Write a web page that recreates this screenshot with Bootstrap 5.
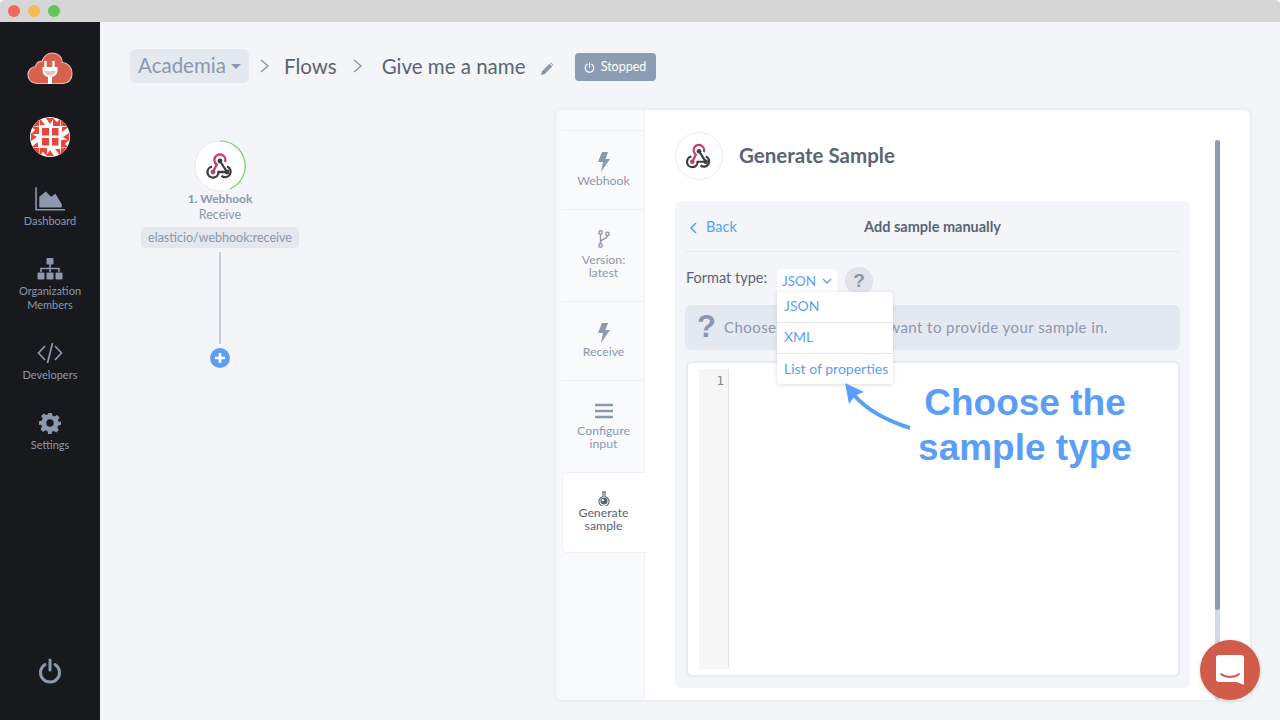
<!DOCTYPE html>
<html lang="en">
<head>
    <meta charset="UTF-8">
    <title>Generate Sample</title>
    <link rel="stylesheet" href="https://cdn.jsdelivr.net/npm/bootstrap@5.3.0/dist/css/bootstrap.min.css">
    <style>
        html, body { height: 720px; overflow: hidden; }
        body { font-family: Lato, "Noto Sans", sans-serif; background: #f3f5f8; color: #5a6473; }
        .mac-bar { height: 22px; background: #d6d6d6; padding-left: 8px; gap: 8px; border-radius: 5px 5px 0 0; }
        .mac-dot { width: 12px; height: 12px; border-radius: 50%; }
        .app-wrap { height: 698px; position: relative; }

        .side-rail { width: 100px; background: #17191c; color: #8b98ae; font-size: 11px; line-height: 14px; }
        .rail-logo { margin-top: 29px; }
        .rail-avatar { margin-top: 30px; margin-bottom: 30px; }
        .rail-link { height: 70px; }
        .rail-tall { height: 84px; }
        .rail-ico { height: 24px; margin-bottom: 3px; }
        .rail-power { margin-bottom: 36px; }

        .crumb-row { height: 88px; padding-left: 30px; color: #5a6473; font-size: 20.5px; }
        .org-pill { height: 34px; width: 119px; background: #e4e8ef; border-radius: 6px; color: #8b98ae; font-size: 20.5px; padding-bottom: 2px; }
        .caret-down { border: 5px solid transparent; border-top-color: #8b98ae; border-bottom: 0; margin-left: 5px; margin-top: 2px; }
        .crumb-sep { margin: 0 17px 0 14px; }
        .crumb-sep-first { margin: 0 12px 0 9px; }
        .crumb-pen { margin-left: 14px; margin-top: 6px; }
        .state-pill { width: 81px; height: 28px; background: #8d9bb3; color: #fff; font-size: 12.5px; border-radius: 4px; margin-left: 21px; margin-top: 2px; gap: 6px; }

        .canvas-col { width: 456px; }
        .node-wrap { width: 180px; margin-left: 30px; padding-top: 30px; }
        .node-circle { width: 52px; height: 52px; }
        .node-title { font-size: 12px; font-weight: 700; color: #8b98ae; line-height: 16px; margin-top: -1px; }
        .node-sub { font-size: 12.5px; color: #8b98ae; line-height: 16px; }
        .node-tag { font-size: 12.5px; color: #8b98ae; background: #e4e7ed; border-radius: 4px; height: 21px; line-height: 21px; width: 158px; margin-top: 4px; }
        .node-line { width: 2px; height: 92px; background: #c6ced9; margin-top: 4px; }
        .node-add { width: 20px; height: 20px; margin-top: 4px; }

        .sheet { width: 694px; height: 590px; background: #fff; border-radius: 6px; box-shadow: 0 0 4px rgba(100,110,130,.12); overflow: hidden; position: relative; }
        .tab-col { width: 89px; background: #f9fafc; border-right: 1px solid #eef0f4; padding-top: 20px; padding-left: 6px; }
        .tab-item { border-top: 1px solid #eef0f4; color: #8b98ae; font-size: 12.3px; line-height: 13px; text-align: center; width: 83px; }
        .tab-on { background: #fff; color: #5a6473; border: 1px solid #eef0f4; border-right: 0; border-radius: 5px 0 0 5px; width: 84px; height: 81px; padding-right: 2px; }
        .tab-a { height: 79px; padding-top: 21px; }
        .tab-b { height: 92px; padding-top: 20px; }
        .tab-c { height: 79px; padding-top: 21px; }
        .tab-d { height: 92px; padding-top: 22px; }
        .tab-e { padding-top: 18px; }
        .tab-ico { margin-bottom: 2px; }
        .tab-ico-tall { margin-bottom: 5px; }
        .tab-ico-menu { margin-bottom: 5px; }

        .sheet-body { padding: 22px 30px 0 30px; width: 605px; }
        .head-row { gap: 16px; }
        .hook-circle { width: 48px; height: 48px; background: #fff; border: 1px solid #eceef2; border-radius: 50%; }
        .sheet-title { font-size: 20.5px; font-weight: 700; color: #5a6473; margin-top: -2px; }
        .gray-box { width: 515px; height: 487px; background: #f3f5f8; border-radius: 6px; margin-top: 21px; padding: 0 10px; position: relative; }
        .back-row { height: 51px; border-bottom: 1px solid #e8ebef; position: relative; font-size: 14.5px; }
        .back-link { color: #5b9ef7; position: absolute; left: 4px; top: 16px; line-height: 20px; }
        .back-chev { margin-right: 8px; }
        .box-title { font-weight: 700; font-size: 14.5px; color: #5a6473; margin-top: 1px; }
        .format-row { height: 53px; font-size: 14.5px; }
        .format-lbl { margin-top: 15px; width: 81px; white-space: nowrap; margin-left: 1px; }
        .fmt-select { width: 60px; height: 24px; background: #fff; color: #5b9ef7; border-radius: 5px 5px 0 0; font-size: 13.5px; margin-left: 10px; margin-top: 17px; gap: 6px; }
        .help-dot { width: 28px; height: 28px; border-radius: 50%; background: #e0e3e9; color: #8b98ae; font-weight: 700; font-size: 19px; margin-left: 8px; margin-top: 15px; font-family: "Liberation Sans", Arial, sans-serif; }
        .info-strip { height: 45px; background: #e4e9f1; border-radius: 6px; color: #8b98ae; font-size: 15px; padding-left: 12px; letter-spacing: .44px; }
        .info-q { font-family: "Liberation Sans", Arial, sans-serif; font-size: 31px; font-weight: 700; width: 18px; margin-right: 9px; letter-spacing: 0; }
        .fmt-menu { position: absolute; left: 102px; top: 91px; width: 116px; height: 92px; background: #fff; border-radius: 0 4px 4px 4px; box-shadow: 0 1px 4px rgba(60,70,90,.18); color: #5b9ef7; font-size: 14px; z-index: 2; }
        .fmt-opt { height: 31px; padding-left: 7px; padding-bottom: 3px; border-bottom: 1px solid #e6e8ec; white-space: nowrap; }
        .fmt-opt:last-child { border-bottom: 0; }
        .code-box { height: 316px; margin-top: 11px; margin-left: 1px; background: #fff; border: 2px solid #e8eaee; border-radius: 6px; padding: 6px 0 6px 11px; }
        .code-gutter { width: 30px; height: 100%; background: #f6f6f6; border-right: 1px solid #e4e4e4; color: #888; font-family: "DejaVu Sans Mono", monospace; font-size: 13px; text-align: right; padding-right: 4px; line-height: 24px; }
        .scroll-track { position: absolute; left: 659px; top: 30px; width: 5px; height: 560px; background: #d3dae6; border-radius: 3px; }
        .scroll-thumb { height: 470px; background: #8d9bb3; border-radius: 3px; }

        .note-txt { position: absolute; left: 878px; top: 358px; width: 294px; text-align: center; font-family: "Liberation Sans", Arial, sans-serif; font-weight: 700; font-size: 37px; line-height: 45px; color: #5b9ef7; z-index: 3; }
        .note-arrow { position: absolute; left: 835px; top: 358px; z-index: 3; }
        .chat-bubble { position: absolute; left: 1200px; top: 640px; width: 60px; height: 60px; border-radius: 50%; background: #d25c4b; z-index: 4; box-shadow: 0 1px 4px rgba(0,0,0,.15); }
    </style>
</head>
<body>

    <!-- window bar -->
    <div class="mac-bar d-flex align-items-center">
        <span class="mac-dot" style="background:#ee6a5f"></span>
        <span class="mac-dot" style="background:#f5bd4f"></span>
        <span class="mac-dot" style="background:#61c454"></span>
    </div>

    <div class="app-wrap d-flex">

        <!-- left rail -->
        <div class="side-rail d-flex flex-column align-items-center text-center flex-shrink-0">
            <svg class="rail-logo" width="46" height="36" viewBox="0 0 46 36">
                <path d="M10 32.500C4.500 32.500 1 28.500 1 24C1 19.500 4 16 8.500 15.500C9.500 11.500 12 10 15 10.500C17 5 21 2 25.500 2C31 2 35 6 35.500 11.500C41 12 45 16.500 45 22.500C45 28.500 41 32.500 36 32.500Z" fill="#d8604f" stroke="#f0b5a8" stroke-width="1.200"/>
                <path d="M18.500 10v6M26.500 10v6" stroke="#fff" stroke-width="2.400"/>
                <path d="M15.500 16h15v3.500c0 3.500-3 6-5.500 6.500v7h-4v-7c-2.500-.5-5.500-3-5.500-6.500Z" fill="#fff"/>
                <path d="M17 20h12c-.5 2-3 4.500-6 4.500s-5.500-2.500-6-4.500Z" fill="#f3c3b9"/>
            </svg>
            <svg class="rail-avatar" width="40" height="40" viewBox="0 0 40 40">
                <defs>
                    <clipPath id="avaClip"><circle cx="20" cy="20" r="20"/></clipPath>
                    <path id="avaTri" d="M1 9 9 1v8ZM9 0l6 8H10ZM16 1l4 6 4-6ZM31 9l-8-8v8ZM31 0l-6 8h5ZM3 4l5-4H3ZM37 4l-5-4h5Z"/>
                </defs>
                <g clip-path="url(#avaClip)">
                    <rect width="40" height="40" fill="#fff"/>
                    <g fill="#e8463c">
                        <use href="#avaTri"/>
                        <use href="#avaTri" transform="rotate(90 20 20)"/>
                        <use href="#avaTri" transform="rotate(180 20 20)"/>
                        <use href="#avaTri" transform="rotate(270 20 20)"/>
                        <rect x="12" y="11" width="7" height="7.500"/><rect x="22" y="11" width="6.500" height="7.500"/>
                        <rect x="12" y="21" width="7" height="7.500"/><rect x="22" y="21" width="6.500" height="7.500"/>
                    </g>
                </g>
            </svg>
            <div class="rail-link">
                <svg class="rail-ico d-block mx-auto" width="30" height="24" viewBox="0 0 28 22"><path d="M1 0v21h27" fill="none" stroke="#8b98ae" stroke-width="1.500"/><path d="M4 19V9l6-5 5 5 4-3 6 10v3Z" fill="#8b98ae"/></svg>
                <div>Dashboard</div>
            </div>
            <div class="rail-link rail-tall">
                <svg class="rail-ico d-block mx-auto" width="26" height="24" viewBox="0 0 26 22"><g fill="#8b98ae"><rect x="9.500" y="0" width="7" height="6.500" rx="1"/><rect x="0.500" y="14.500" width="7" height="7" rx="1"/><rect x="9.500" y="14.500" width="7" height="7" rx="1"/><rect x="18.500" y="14.500" width="7" height="7" rx="1"/></g><path d="M13 6v8M4 14v-3.500h18V14" fill="none" stroke="#8b98ae" stroke-width="1.600"/></svg>
                <div>Organization<br>Members</div>
            </div>
            <div class="rail-link">
                <svg class="rail-ico d-block mx-auto" width="26" height="24" viewBox="0 0 26 22"><path d="M8 4 1.500 11 8 18M18 4l6.500 7L18 18M15.500 1l-5 20" fill="none" stroke="#8b98ae" stroke-width="1.700"/></svg>
                <div>Developers</div>
            </div>
            <div class="rail-link">
                <svg class="rail-ico d-block mx-auto" width="22" height="24" viewBox="0 0 24 24"><path d="M10 1h4l.7 3.100 2.200.9 2.700-1.700 2.800 2.800-1.700 2.700.9 2.200L24 10v4l-3.100.7-.9 2.200 1.700 2.700-2.800 2.800-2.700-1.700-2.200.9L14 24h-4l-.7-3.100-2.200-.9-2.700 1.700-2.800-2.800 1.700-2.700-.9-2.200L0 14v-4l3.100-.7.9-2.200-1.700-2.700 2.800-2.800 2.700 1.700 2.200-.9Z" fill="#8b98ae"/><circle cx="12" cy="12" r="4" fill="#17191c"/></svg>
                <div>Settings</div>
            </div>
            <svg class="mt-auto rail-power" width="24" height="26" viewBox="0 0 24 26"><path d="M7 6.500a9.500 9.500 0 1 0 10 0" fill="none" stroke="#8b98ae" stroke-width="3" stroke-linecap="round"/><path d="M12 2v10" stroke="#8b98ae" stroke-width="3" stroke-linecap="round"/></svg>
        </div>

        <!-- main area -->
        <div class="flex-grow-1">
            <div class="crumb-row d-flex align-items-center">
                <div class="org-pill d-flex align-items-center justify-content-center">Academia<span class="caret-down"></span></div>
                <svg class="crumb-sep-first" width="14" height="16" viewBox="0 0 14 16"><path d="M3 2l7 6-7 6" fill="none" stroke="#8b98ae" stroke-width="1.500"/></svg>
                <span>Flows</span>
                <svg class="crumb-sep" width="14" height="16" viewBox="0 0 14 16"><path d="M3 2l7 6-7 6" fill="none" stroke="#8b98ae" stroke-width="1.500"/></svg>
                <span>Give me a name</span>
                <svg class="crumb-pen" width="14" height="14" viewBox="0 0 14 14"><path d="M1 13l.8-3.500L9.500 1.800l2.700 2.700-7.700 7.700ZM10.300 1l.7-.5 2.500 2.500-.5.700Z" fill="#8b98ae"/></svg>
                <div class="state-pill d-flex align-items-center justify-content-center">
                    <svg width="11" height="11" viewBox="0 0 12 12"><path d="M3.500 2.500a4.700 4.700 0 1 0 5 0M6 .8v5" fill="none" stroke="#fff" stroke-width="1.300" stroke-linecap="round"/></svg>
                    <span>Stopped</span>
                </div>
            </div>

            <div class="d-flex">
                <div class="canvas-col flex-shrink-0">
                    <div class="node-wrap d-flex flex-column align-items-center text-center">
                        <svg class="node-circle" viewBox="0 0 52 52">
                            <circle cx="26" cy="26" r="25" fill="#fff" stroke="#e8eaee"/>
                            <path d="M26 1a25 25 0 0 1 10 48" fill="none" stroke="#7ccb77" stroke-width="1.200"/>
                            <g id="hookMark">
                                <g fill="none" stroke-width="2.300">
                                    <path d="M18 26.700A5.500 5.500 0 1 0 24.500 32H33" stroke="#3d3d40"/>
                                    <path d="M33 26.500A5.500 5.500 0 1 1 27.500 35.800" stroke="#3d3d40"/>
                                    <path d="M26 21l7 11" stroke="#3d3d40"/>
                                    <path d="M19 32 22.800 24.500A5.500 5.500 0 1 1 31 22" stroke="#c73a63"/>
                                </g>
                                <circle cx="26" cy="21" r="2.400" fill="#3d3d40"/>
                                <circle cx="19" cy="32" r="2.400" fill="#c73a63"/>
                                <circle cx="33" cy="32" r="2.400" fill="#3d3d40"/>
                            </g>
                        </svg>
                        <div class="node-title">1. Webhook</div>
                        <div class="node-sub">Receive</div>
                        <div class="node-tag">elasticio/webhook:receive</div>
                        <div class="node-line"></div>
                        <svg class="node-add" viewBox="0 0 20 20"><circle cx="10" cy="10" r="10" fill="#5b9ef7"/><path d="M10 5v10M5 10h10" stroke="#fff" stroke-width="2.600"/></svg>
                    </div>
                </div>

                <div class="sheet d-flex flex-shrink-0">
                    <div class="tab-col flex-shrink-0">
                        <div class="tab-item tab-a">
                            <svg class="d-block mx-auto tab-ico" width="12" height="20" viewBox="0 0 12 20"><path d="M4 0h6L7.500 7H12L3 20l2-10H0Z" fill="#8b98ae"/></svg>
                            Webhook
                        </div>
                        <div class="tab-item tab-b">
                            <svg class="d-block mx-auto tab-ico-tall" width="12" height="18" viewBox="0 0 12 18"><g fill="none" stroke="#8b98ae" stroke-width="1.400"><circle cx="2.500" cy="2.500" r="1.700"/><circle cx="2.500" cy="15.500" r="1.700"/><circle cx="9.500" cy="4" r="1.700"/><path d="M2.500 4.500v9M2.500 12c0-3 7-3 7-6.500"/></g></svg>
                            Version:<br>latest
                        </div>
                        <div class="tab-item tab-c">
                            <svg class="d-block mx-auto tab-ico" width="12" height="20" viewBox="0 0 12 20"><path d="M4 0h6L7.500 7H12L3 20l2-10H0Z" fill="#8b98ae"/></svg>
                            Receive
                        </div>
                        <div class="tab-item tab-d">
                            <svg class="d-block mx-auto tab-ico-menu" width="18" height="16" viewBox="0 0 18 16"><path d="M0 2h18M0 8h18M0 14h18" stroke="#8b98ae" stroke-width="2.400"/></svg>
                            Configure<br>input
                        </div>
                        <div class="tab-item tab-on tab-e">
                            <svg class="d-block mx-auto" width="12" height="15" viewBox="0 0 12 15"><path d="M4 1h4M5 1v4.500a5 5 0 1 0 2 0V1" fill="#fff" stroke="#5a6473" stroke-width="1.100"/><circle cx="6" cy="10" r="3.600" fill="#5a6473"/><circle cx="4.800" cy="9.200" r="1.100" fill="#fff"/></svg>
                            Generate<br>sample
                        </div>
                    </div>

                    <div class="sheet-body">
                        <div class="head-row d-flex align-items-center">
                            <svg class="hook-circle" viewBox="2 2 48 48"><use href="#hookMark"/></svg>
                            <div class="sheet-title">Generate Sample</div>
                        </div>

                        <div class="gray-box">
                            <div class="back-row d-flex align-items-center justify-content-center">
                                <span class="back-link">
                                    <svg class="back-chev" width="9" height="12" viewBox="0 0 9 12"><path d="M7 1 2 6l5 5" fill="none" stroke="#5b9ef7" stroke-width="1.600"/></svg>Back
                                </span>
                                <span class="box-title">Add sample manually</span>
                            </div>
                            <div class="format-row d-flex align-items-start">
                                <span class="format-lbl">Format type:</span>
                                <div class="fmt-select d-flex align-items-center justify-content-center">JSON
                                    <svg width="10" height="7" viewBox="0 0 10 7"><path d="M1 1l4 4 4-4" fill="none" stroke="#5b9ef7" stroke-width="1.400"/></svg>
                                </div>
                                <div class="help-dot d-flex align-items-center justify-content-center">?</div>
                            </div>
                            <div class="fmt-menu">
                                <div class="fmt-opt d-flex align-items-center">JSON</div>
                                <div class="fmt-opt d-flex align-items-center">XML</div>
                                <div class="fmt-opt d-flex align-items-center">List of properties</div>
                            </div>
                            <div class="info-strip d-flex align-items-center">
                                <span class="info-q">?</span>
                                <span>Choose the format you want to provide your sample in.</span>
                            </div>
                            <div class="code-box">
                                <div class="code-gutter">1</div>
                            </div>
                        </div>
                    </div>

                    <div class="scroll-track"><div class="scroll-thumb"></div></div>
                </div>
            </div>
        </div>

        <!-- annotation over the page -->
        <svg class="note-arrow" width="84" height="80" viewBox="0 0 84 80">
            <path d="M75 48C50 40 30 28 19 15" fill="none" stroke="#5b9ef7" stroke-width="4"/>
            <path d="M10 3 29 12 20 15.500 14 24Z" fill="#5b9ef7"/>
        </svg>
        <div class="note-txt">Choose the<br>sample type</div>
    </div>

    <!-- chat launcher -->
    <div class="chat-bubble d-flex align-items-center justify-content-center">
        <svg width="30" height="34" viewBox="0 0 30 34"><path d="M4 2h22a3 3 0 0 1 3 3v27l-7-3H4a3 3 0 0 1-3-3V5a3 3 0 0 1 3-3Z" fill="#fff"/><path d="M6 21c5 4 13 4 18 0" fill="none" stroke="#d25c4b" stroke-width="1.800" stroke-linecap="round"/></svg>
    </div>

    <script src="https://cdn.jsdelivr.net/npm/bootstrap@5.3.0/dist/js/bootstrap.bundle.min.js"></script>
</body>
</html>
